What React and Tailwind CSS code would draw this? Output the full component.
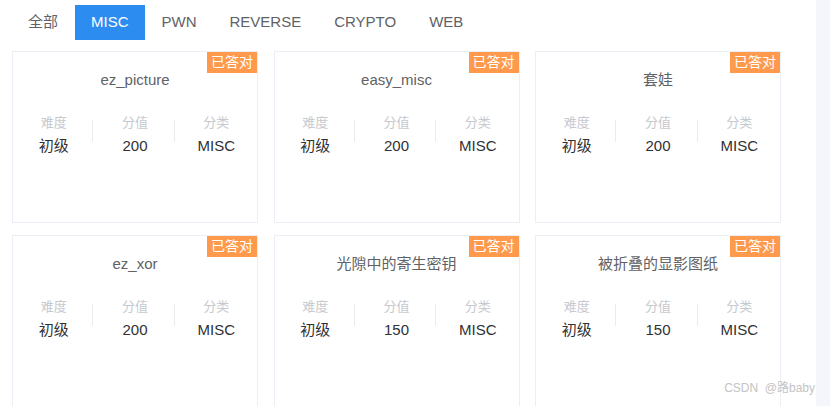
import React, { useState } from "react";

const tabs = ["全部", "MISC", "PWN", "REVERSE", "CRYPTO", "WEB"];

const challenges = [
  { title: "ez_picture", level: "初级", score: 200, type: "MISC" },
  { title: "easy_misc", level: "初级", score: 200, type: "MISC" },
  { title: "套娃", level: "初级", score: 200, type: "MISC" },
  { title: "ez_xor", level: "初级", score: 200, type: "MISC" },
  { title: "光隙中的寄生密钥", level: "初级", score: 150, type: "MISC" },
  { title: "被折叠的显影图纸", level: "初级", score: 150, type: "MISC" },
];

function Card({ c }) {
  return (
    <div className="relative h-[172px] border border-[#ebeef5] bg-white">
      {/* SOLVED BADGE */}
      <span className="absolute right-0 top-0 h-[21px] px-[4px] bg-[#ff9a4d] text-white text-[14px] leading-[21px]">
        已答对
      </span>

      <p className="pt-[18px] text-center text-[15px] leading-[20px] text-[#606266]">
        {c.title}
      </p>

      <div className="mt-[24px] grid grid-cols-3">
        {[
          ["难度", c.level],
          ["分值", c.score],
          ["分类", c.type],
        ].map(([label, value], i) => (
          <div key={label} className="relative flex flex-col items-center">
            {i > 0 && (
              <span className="absolute left-[-2px] top-[6px] h-[22px] w-px bg-[#e8ebf0]" />
            )}
            <span className="text-[13px] leading-[18px] text-[#c6c9ce]">
              {label}
            </span>
            <span className="mt-[4px] text-[15px] leading-[20px] text-[#303133]">
              {value}
            </span>
          </div>
        ))}
      </div>
    </div>
  );
}

export default function App() {
  const [active, setActive] = useState("MISC");

  return (
    <div
      className="relative flex h-[406px] w-[830px] overflow-hidden bg-white"
      style={{ fontFamily: '"Liberation Sans", "Noto Sans CJK SC", sans-serif' }}
    >
      <div className="w-[816px] bg-white">
        {/* TABS */}
        <div className="mt-[5px] ml-[11.5px] flex">
          {tabs.map((t) => (
            <button
              key={t}
              onClick={() => setActive(t)}
              className={`h-[35px] px-[16.5px] text-[15px] ${
                active === t ? "bg-[#2d8cf0] text-white" : "text-[#606266]"
              }`}
            >
              {t}
            </button>
          ))}
        </div>

        {/* CARDS */}
        <div className="mt-[11px] ml-[12px] grid w-[769px] grid-cols-3 gap-x-[15.5px] gap-y-[12px]">
          {challenges.map((c) => (
            <Card key={c.title} c={c} />
          ))}
        </div>
      </div>

      <div className="flex-1 bg-[#f4f6fb]" />

      {/* WATERMARK */}
      <span className="absolute right-[15px] bottom-[9px] text-[12px] text-[#c4c4c4]">
        CSDN&nbsp;&nbsp;@路baby
      </span>
    </div>
  );
}
